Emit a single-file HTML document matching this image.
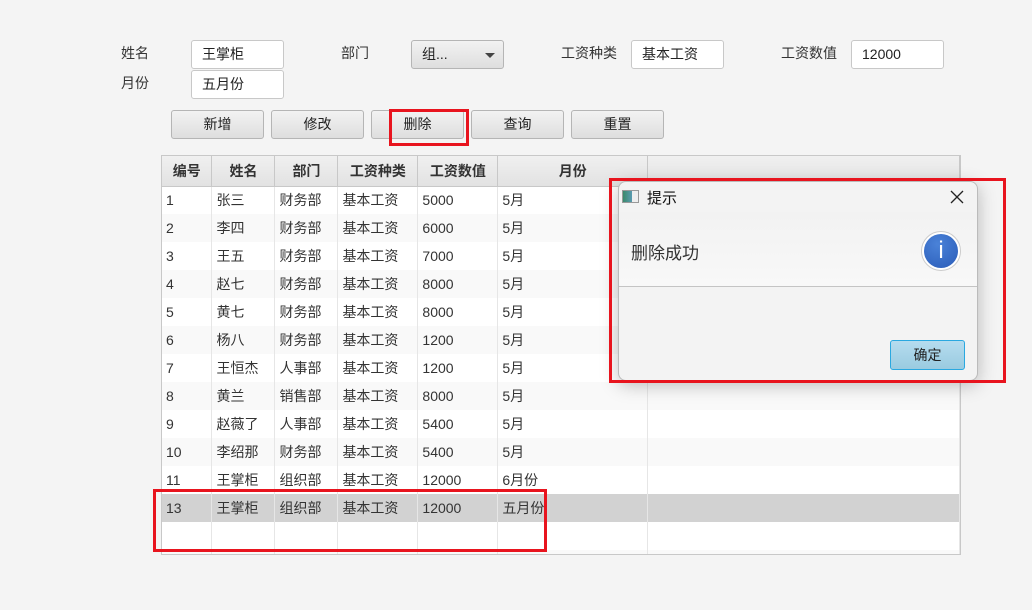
<!DOCTYPE html>
<html><head><meta charset="utf-8"><style>
*{box-sizing:border-box;margin:0;padding:0}
body{width:1032px;height:610px;background:#f4f4f4;font-family:"Liberation Sans","Noto Sans CJK SC",sans-serif;font-size:14px;color:#333;position:relative;overflow:hidden}
.a{position:absolute}
.lbl{font-size:14px;color:#333}
.tf{position:absolute;background:#fff;border:1px solid #c8c8c8;border-radius:3px;height:29px;padding-left:10px;line-height:27px;font-size:14px;color:#222}
.btn{position:absolute;height:29px;width:93px;border:1px solid #b5b5b5;border-radius:3px;background:linear-gradient(#f2f2f2,#dedede);text-align:center;line-height:27px;font-size:14px;color:#222}
.red{position:absolute;border:3px solid #e8141e}
table{border-collapse:collapse;table-layout:fixed}
td{height:28px;border-right:1px solid #e6e6e6;padding-left:4px;font-size:14px;color:#333;white-space:nowrap;overflow:hidden}
tr.o td{background:#f9f9f9}
tr.s td{background:#d2d2d2}
th{height:30px;background:linear-gradient(#f0f0f0,#e2e2e2);border-right:1px solid #c8c8c8;border-bottom:1px solid #c8c8c8;font-weight:bold;font-size:14px;color:#333}
</style></head><body>
<div class="a lbl" style="left:121px;top:43px">姓名</div>
<div class="tf" style="left:191px;top:40px;width:93px">王掌柜</div>
<div class="a lbl" style="left:121px;top:73px">月份</div>
<div class="tf" style="left:191px;top:70px;width:93px">五月份</div>
<div class="a lbl" style="left:341px;top:43px">部门</div>
<div class="btn" style="left:411px;top:40px;width:93px;text-align:left;padding-left:10px">组...<span style="position:absolute;left:73px;top:12px;border-left:5px solid transparent;border-right:5px solid transparent;border-top:5px solid #444"></span></div>
<div class="a lbl" style="left:561px;top:43px">工资种类</div>
<div class="tf" style="left:631px;top:40px;width:93px">基本工资</div>
<div class="a lbl" style="left:781px;top:43px">工资数值</div>
<div class="tf" style="left:851px;top:40px;width:93px">12000</div>

<div class="btn" style="left:171px;top:110px">新增</div>
<div class="btn" style="left:271px;top:110px">修改</div>
<div class="btn" style="left:371px;top:110px">删除</div>
<div class="btn" style="left:471px;top:110px">查询</div>
<div class="btn" style="left:571px;top:110px">重置</div>
<div class="red" style="left:389px;top:109px;width:80px;height:37px"></div>

<div class="a" style="left:161px;top:155px;width:800px;height:400px;border:1px solid #c8c8c8;background:#fff;overflow:hidden">
<table>
<colgroup><col style="width:50px"><col style="width:63px"><col style="width:63px"><col style="width:80px"><col style="width:80px"><col style="width:150px"><col style="width:312px"></colgroup>
<tr><th style="height:30px">编号</th><th>姓名</th><th>部门</th><th>工资种类</th><th>工资数值</th><th>月份</th><th></th></tr>
<tr><td>1</td><td>张三</td><td>财务部</td><td>基本工资</td><td>5000</td><td>5月</td><td></td></tr>
<tr class="o"><td>2</td><td>李四</td><td>财务部</td><td>基本工资</td><td>6000</td><td>5月</td><td></td></tr>
<tr><td>3</td><td>王五</td><td>财务部</td><td>基本工资</td><td>7000</td><td>5月</td><td></td></tr>
<tr class="o"><td>4</td><td>赵七</td><td>财务部</td><td>基本工资</td><td>8000</td><td>5月</td><td></td></tr>
<tr><td>5</td><td>黄七</td><td>财务部</td><td>基本工资</td><td>8000</td><td>5月</td><td></td></tr>
<tr class="o"><td>6</td><td>杨八</td><td>财务部</td><td>基本工资</td><td>1200</td><td>5月</td><td></td></tr>
<tr><td>7</td><td>王恒杰</td><td>人事部</td><td>基本工资</td><td>1200</td><td>5月</td><td></td></tr>
<tr class="o"><td>8</td><td>黄兰</td><td>销售部</td><td>基本工资</td><td>8000</td><td>5月</td><td></td></tr>
<tr><td>9</td><td>赵薇了</td><td>人事部</td><td>基本工资</td><td>5400</td><td>5月</td><td></td></tr>
<tr class="o"><td>10</td><td>李绍那</td><td>财务部</td><td>基本工资</td><td>5400</td><td>5月</td><td></td></tr>
<tr><td>11</td><td>王掌柜</td><td>组织部</td><td>基本工资</td><td>12000</td><td>6月份</td><td></td></tr>
<tr class="s"><td>13</td><td>王掌柜</td><td>组织部</td><td>基本工资</td><td>12000</td><td>五月份</td><td></td></tr>
<tr><td></td><td></td><td></td><td></td><td></td><td></td><td></td></tr>
<tr class="o"><td></td><td></td><td></td><td></td><td></td><td></td><td></td></tr>
</table>
</div>
<div class="red" style="left:153px;top:489px;width:394px;height:63px"></div>

<div class="a" style="left:618px;top:181px;width:360px;height:200px;border:1px solid #bbb;border-radius:8px;background:#f3f3f3;box-shadow:0 4px 18px rgba(0,0,0,.25);overflow:hidden">
<div class="a" style="left:0;top:30px;width:360px;height:75px;background:linear-gradient(#f2f2f2,#f8f8f8);border-bottom:1px solid #c4c4c4"></div>
<div class="a" style="left:3px;top:8px;width:17px;height:13px;border:1px solid #999;background:linear-gradient(90deg,#3a8a6a 0,#5a9ab0 60%,#eee 60%)"></div>
<div class="a" style="left:28px;top:5px;font-size:15px;color:#111">提示</div>
<svg class="a" style="left:331px;top:8px" width="14" height="14" viewBox="0 0 14 14"><path d="M1 1L13 13M13 1L1 13" stroke="#222" stroke-width="1.3"/></svg>
<div class="a" style="left:12px;top:57px;font-size:17px;color:#333">删除成功</div>
<div class="a" style="left:302px;top:49px;width:40px;height:40px;border-radius:50%;background:#fff;border:1px solid #ccc"></div>
<div class="a" style="left:305px;top:52px;width:34px;height:34px;border-radius:50%;background:radial-gradient(circle at 40% 30%,#4a82d8,#2a5cb8);color:#fff;text-align:center;line-height:34px;font-size:24px;font-family:'Liberation Sans',sans-serif">i</div>
<div class="a" style="left:271px;top:158px;width:75px;height:30px;border:1px solid #2aa8e0;border-radius:3px;background:linear-gradient(#b6dcef,#9acbe0);text-align:center;line-height:28px;font-size:14px;color:#222">确定</div>
</div>
<div class="red" style="left:609px;top:178px;width:397px;height:205px"></div>
</body></html>
